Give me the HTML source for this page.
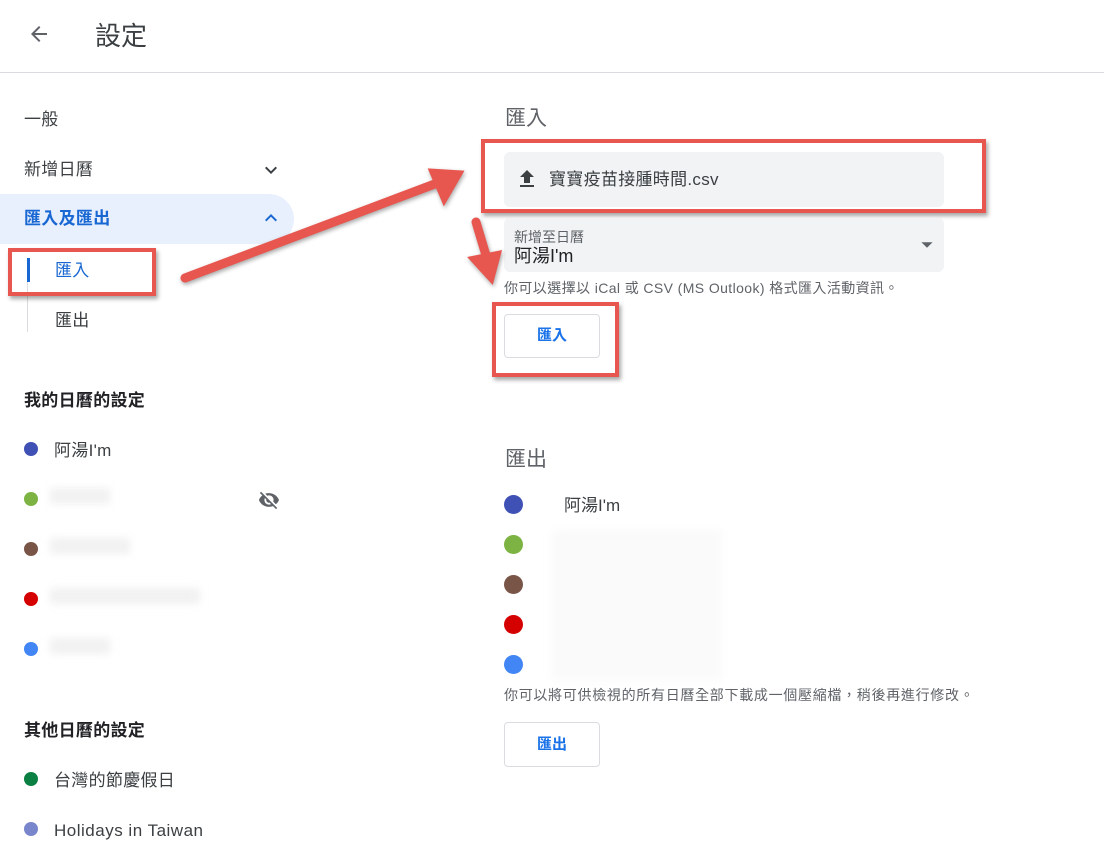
<!DOCTYPE html>
<html><head><meta charset="utf-8"><style>
body{margin:0;width:1104px;height:867px;background:#fff;font-family:"Liberation Sans","Noto Sans CJK TC",sans-serif;color:#3c4043;position:relative;overflow:hidden}
.a{position:absolute;white-space:nowrap;line-height:1.2}
.s{font-size:17px;letter-spacing:.3px;margin-top:2px}
.dot{position:absolute;width:14px;height:14px;border-radius:50%}
.blur{position:absolute;background:#f1f1f1;filter:blur(4px);height:16px}
.btn{position:absolute;border:1px solid #dadce0;border-radius:4px;color:#1a73e8;font-size:15px;text-align:center;font-weight:bold;background:#fff}
.red{position:absolute;border:4px solid #e8574f;box-shadow:2px 3px 4px rgba(0,0,0,.35)}
</style></head><body>
<svg class="a" style="left:26px;top:22px" width="26" height="24" viewBox="0 0 24 24"><path d="M20 11H7.8l5.6-5.6L12 4l-8 8 8 8 1.4-1.4L7.8 13H20z" fill="#5f6368"/></svg>
<div class="a" style="left:95px;top:21px;font-size:26px;color:#3c4043">設定</div>
<div class="a" style="left:0;top:72px;width:1104px;height:1px;background:#dadce0"></div>

<div class="a s" style="left:24px;top:108px">一般</div>
<div class="a s" style="left:24px;top:158px">新增日曆</div>
<svg class="a" style="left:259px;top:158px" width="24" height="24" viewBox="0 0 24 24"><path d="M7.4 8.6 12 13.2l4.6-4.6L18 10l-6 6-6-6z" fill="#3c4043"/></svg>
<div class="a" style="left:0;top:194px;width:294px;height:50px;background:#e8f0fe;border-radius:0 25px 25px 0"></div>
<div class="a s" style="left:24px;top:207px;color:#1967d2;font-weight:bold">匯入及匯出</div>
<svg class="a" style="left:259px;top:206px" width="24" height="24" viewBox="0 0 24 24"><path d="M7.4 15.4 12 10.8l4.6 4.6L18 14l-6-6-6 6z" fill="#1967d2"/></svg>
<div class="a" style="left:27px;top:258px;width:1px;height:74px;background:#dadce0"></div>
<div class="a" style="left:27px;top:258px;width:3px;height:24px;background:#1967d2"></div>
<div class="a s" style="left:55px;top:259px;color:#1967d2">匯入</div>
<div class="a s" style="left:55px;top:309px">匯出</div>
<div class="red" style="left:8px;top:248px;width:140px;height:40px"></div>

<div class="a s" style="left:24px;top:389px;font-weight:bold;color:#202124">我的日曆的設定</div>
<div class="dot" style="left:24px;top:442px;background:#3f51b5"></div>
<div class="a s" style="left:54px;top:439px">阿湯I'm</div>
<div class="dot" style="left:24px;top:492px;background:#7cb342"></div><div class="blur" style="left:50px;top:488px;width:60px"></div>
<svg class="a" style="left:258px;top:489px" width="22" height="22" viewBox="0 0 24 24"><path d="M12 7c2.8 0 5 2.2 5 5 0 .6-.1 1.3-.4 1.8l2.9 2.9c1.5-1.3 2.7-2.9 3.4-4.7-1.7-4.4-6-7.5-11-7.5-1.4 0-2.7.3-4 .7l2.2 2.2c.6-.3 1.2-.4 1.9-.4zM2 4.3l2.3 2.3.4.4C3.1 8.3 1.8 10 1 12c1.7 4.4 6 7.5 11 7.5 1.5 0 3-.3 4.4-.8l.4.4 2.9 2.9 1.3-1.3L3.3 3zM7.5 9.8l1.6 1.6c0 .2-.1.4-.1.6 0 1.7 1.3 3 3 3 .2 0 .4 0 .6-.1l1.6 1.6c-.7.3-1.4.5-2.2.5-2.8 0-5-2.2-5-5 0-.8.2-1.5.5-2.2z" fill="#5f6368"/></svg>
<div class="dot" style="left:24px;top:542px;background:#795548"></div><div class="blur" style="left:50px;top:538px;width:80px"></div>
<div class="dot" style="left:24px;top:592px;background:#d50000"></div><div class="blur" style="left:50px;top:588px;width:150px"></div>
<div class="dot" style="left:24px;top:642px;background:#4285f4"></div><div class="blur" style="left:50px;top:638px;width:60px"></div>

<div class="a s" style="left:24px;top:719px;font-weight:bold;color:#202124">其他日曆的設定</div>
<div class="dot" style="left:24px;top:772px;background:#0b8043"></div>
<div class="a s" style="left:54px;top:769px">台灣的節慶假日</div>
<div class="dot" style="left:24px;top:822px;background:#7986cb"></div>
<div class="a s" style="left:54px;top:819px;letter-spacing:.5px">Holidays in Taiwan</div>

<div class="a" style="left:505px;top:106px;font-size:21px;color:#5f6368">匯入</div>
<div class="a" style="left:504px;top:152px;width:440px;height:55px;background:#f1f3f4;border-radius:6px"></div>
<svg class="a" style="left:515px;top:167px" width="24" height="24" viewBox="0 0 24 24"><path d="M9 16h6v-6h4l-7-7-7 7h4zm-4 2h14v2H5z" fill="#3c4043"/></svg>
<div class="a" style="left:549px;top:170px;font-size:17px;letter-spacing:.3px">寶寶疫苗接腫時間.csv</div>
<div class="red" style="left:481px;top:139px;width:497px;height:66px"></div>
<div class="a" style="left:504px;top:218px;width:440px;height:54px;background:#f1f3f4;border-radius:6px"></div>
<div class="a" style="left:514px;top:229px;font-size:14px;color:#5f6368">新增至日曆</div>
<div class="a" style="left:514px;top:246px;font-size:18px;color:#202124">阿湯I'm</div>
<svg class="a" style="left:920px;top:238px" width="14" height="14" viewBox="0 0 10 10"><path d="M1 3h8L5 7z" fill="#5f6368"/></svg>
<div class="a" style="left:504px;top:280px;font-size:14px;letter-spacing:.4px;color:#5f6368">你可以選擇以 iCal 或 CSV (MS Outlook) 格式匯入活動資訊。</div>
<div class="btn" style="left:504px;top:314px;width:94px;height:42px;line-height:42px">匯入</div>
<div class="red" style="left:492px;top:302px;width:119px;height:67px"></div>

<div class="a" style="left:505px;top:447px;font-size:21px;color:#5f6368">匯出</div>
<div class="dot" style="left:504px;top:495px;width:19px;height:19px;background:#3f51b5"></div>
<div class="a" style="left:564px;top:496px;font-size:17px">阿湯I'm</div>
<div class="dot" style="left:504px;top:535px;width:19px;height:19px;background:#7cb342"></div>
<div class="dot" style="left:504px;top:575px;width:19px;height:19px;background:#795548"></div>
<div class="dot" style="left:504px;top:615px;width:19px;height:19px;background:#d50000"></div>
<div class="dot" style="left:504px;top:655px;width:19px;height:19px;background:#4285f4"></div>
<div class="blur" style="left:552px;top:530px;width:170px;height:150px;background:#fafafa"></div>
<div class="a" style="left:504px;top:687px;font-size:14px;letter-spacing:.7px;color:#5f6368">你可以將可供檢視的所有日曆全部下載成一個壓縮檔，稍後再進行修改。</div>
<div class="btn" style="left:504px;top:722px;width:94px;height:43px;line-height:43px">匯出</div>

<svg class="a" style="left:0;top:0" width="1104" height="867">
<g stroke="#e8574f" stroke-width="9" stroke-linecap="round" fill="#e8574f" style="filter:drop-shadow(1px 2px 2px rgba(0,0,0,.35))">
<line x1="185" y1="278" x2="440" y2="182"/>
<polygon points="462,172 430,170 444,203" stroke-width="3"/>
<line x1="476" y1="222" x2="488" y2="262"/>
<polygon points="492,282 470,258 500,252" stroke-width="3"/>
</g></svg>
</body></html>
